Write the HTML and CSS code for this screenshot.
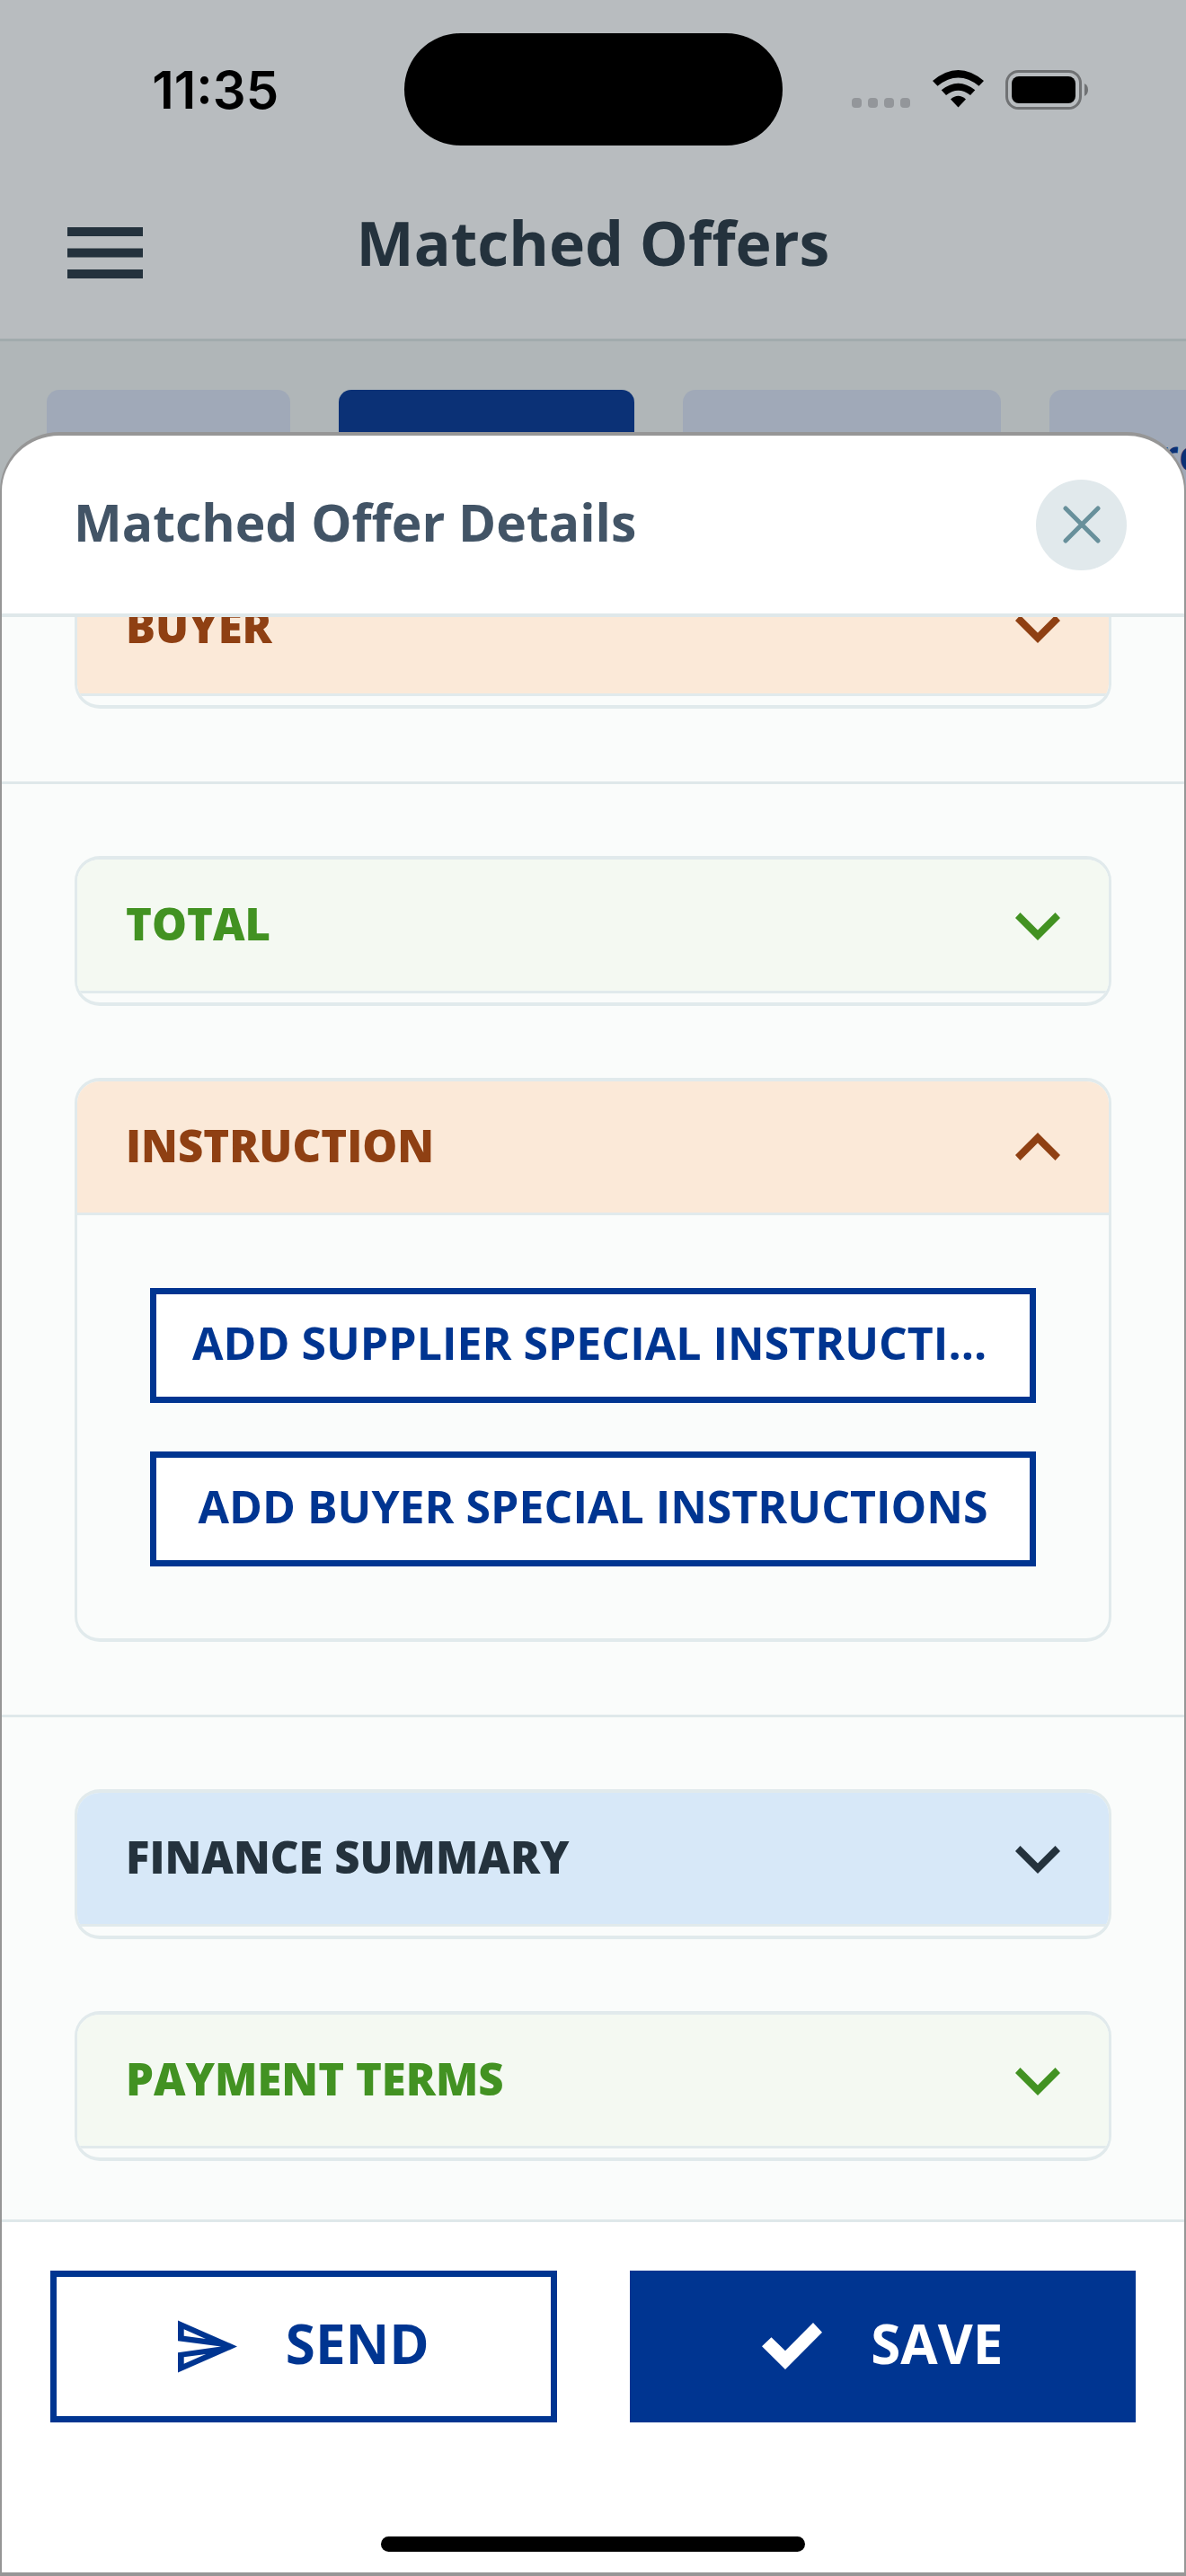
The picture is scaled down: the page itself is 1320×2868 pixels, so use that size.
FILE: index.html
```html
<!DOCTYPE html>
<html lang="en">
<head>
<meta charset="utf-8">
<meta name="viewport" content="width=device-width, initial-scale=1">
<title>Matched Offers</title>
<link rel="stylesheet" href="styles.css">
</head>
<body>
<svg class="sprite" aria-hidden="true">
  <symbol id="chevron-down" viewBox="0 0 50 40"><path d="M5.5 8 25 27.500 44.500 8 50 14 25 39 0 14z"/></symbol>
  <symbol id="chevron-up" viewBox="0 0 50 40"><path d="M5.5 37 25 17.500 44.500 37 50 31 25 6 0 31z"/></symbol>
</svg>

<div class="screen">
  <header class="top">
    <div class="status">
      <time class="clock">11:35</time>
      <div class="island"></div>
      <div class="status-icons" aria-hidden="true">
        <svg width="66" height="43" viewBox="0 0 66 43" fill="#93969a">
          <rect x="0" y="31" width="11" height="11" rx="4"/>
          <rect x="18" y="31" width="11" height="11" rx="4"/>
          <rect x="36" y="31" width="11" height="11" rx="4"/>
          <rect x="54" y="31" width="11" height="11" rx="4"/>
        </svg>
        <svg width="57" height="43" viewBox="0 0 57 43">
          <path d="M0 12Q28.500-12 57 12L51.500 17.700Q28.500-.7 5.500 17.700z"/>
          <path d="M9.700 22.300Q28.500 7.100 47.300 22.300L42 28Q28.500 17.400 15 28z"/>
          <path d="M20 32.500Q28.500 25 37 32.500L28.500 41.500z"/>
        </svg>
        <svg width="93" height="44" viewBox="0 0 93 44">
          <rect x="1.500" y="1.500" width="82" height="41" rx="13" fill="none" stroke="#707274" stroke-width="3"/>
          <rect x="7" y="7" width="71" height="30" rx="8"/>
          <path d="M88 15Q92 17 92 22T88 29z" fill="#707274"/>
        </svg>
      </div>
    </div>
    <div class="app-bar">
      <button class="menu" type="button" aria-label="Menu">
        <svg width="84" height="57" viewBox="0 0 84 57"><path d="M0 0h84v10H0zM0 23.500h84v10H0zM0 47h84v10H0z"/></svg>
      </button>
      <h1 class="app-title">Matched Offers</h1>
    </div>
  </header>

  <nav class="tabs" aria-label="Offer status">
    <button class="tab tab-s" type="button" aria-label="First tab"></button>
    <button class="tab tab-m tab-active" type="button" aria-label="Second tab"></button>
    <button class="tab tab-l" type="button" aria-label="Third tab"></button>
    <button class="tab tab-text" type="button">Processed</button>
  </nav>

  <section class="sheet" role="dialog" aria-labelledby="sheet-title">
    <header class="sheet-head">
      <h2 class="sheet-title" id="sheet-title">Matched Offer Details</h2>
      <button class="close" type="button" aria-label="Close">
        <svg width="42" height="42" viewBox="0 0 42 42"><path d="M3 3 39 39M39 3 3 39"/></svg>
      </button>
    </header>

    <div class="sheet-body">
      <div class="scrolled">
        <div class="group">
          <article class="card">
            <button class="card-head orange" type="button" aria-expanded="false">BUYER<svg class="chevron"><use href="#chevron-down"/></svg></button>
          </article>
        </div>
        <div class="group">
          <article class="card">
            <button class="card-head green" type="button" aria-expanded="false">TOTAL<svg class="chevron"><use href="#chevron-down"/></svg></button>
          </article>
          <article class="card">
            <button class="card-head orange" type="button" aria-expanded="true">INSTRUCTION<svg class="chevron"><use href="#chevron-up"/></svg></button>
            <div class="card-body">
              <button class="outline-btn" type="button">ADD SUPPLIER SPECIAL INSTRUCTIONS</button>
              <button class="outline-btn" type="button">ADD BUYER SPECIAL INSTRUCTIONS</button>
            </div>
          </article>
        </div>
        <div class="group">
          <article class="card">
            <button class="card-head blue" type="button" aria-expanded="false">FINANCE SUMMARY<svg class="chevron"><use href="#chevron-down"/></svg></button>
          </article>
          <article class="card">
            <button class="card-head green" type="button" aria-expanded="false">PAYMENT TERMS<svg class="chevron"><use href="#chevron-down"/></svg></button>
          </article>
        </div>
      </div>
    </div>

    <footer class="sheet-foot">
      <div class="actions">
        <button class="action" type="button">
          <svg width="66" height="66" viewBox="0 0 66 66"><path fill-rule="evenodd" d="M0 7.500 66 36.500 0 65.500V43.200L48 36.500 0 30.200zM6.700 17.200V24.800L31 28zM6.700 55.800V48.200L31 45z"/></svg>
          SEND
        </button>
        <button class="action action-primary" type="button">
          <svg width="67" height="66" viewBox="0 0 67 66"><path d="M0 36.300 10.500 26.300 26 41.300 57 10 67 20.700 26 62z"/></svg>
          SAVE
        </button>
      </div>
      <div class="home-indicator"></div>
    </footer>
  </section>
</div>
</body>
</html>
```
FILE: styles.css
```css
:root {
  --blue: #003591;
  --ink: #24323d;
  --line: #dfe8ea;
  --card-line: #e1eaec;
}

* { box-sizing: border-box; }

body {
  margin: 0;
  font-family: "Open Sans", "Noto Sans", sans-serif;
  color: var(--ink);
}

button {
  margin: 0;
  padding: 0;
  border: 0;
  background: none;
  font: inherit;
  color: inherit;
}

h1, h2 { margin: 0; }

.sprite {
  position: absolute;
  width: 0;
  height: 0;
}

.screen {
  position: relative;
  height: 100vh;
  background: #b0b6b8;
  overflow: hidden;
}

/* Status bar and app bar */
.top {
  background: #b8bcbf;
  border-bottom: 3px solid #a1abad;
}

.status {
  display: grid;
  grid-template-columns: 1fr 421px 1fr;
  align-items: center;
  padding-top: 37px;
}

.clock {
  padding-left: 30px;
  text-align: center;
  font: 600 58px/60px Inter, sans-serif;
  color: #000;
}

.island {
  height: 125px;
  border-radius: 63px;
  background: #000;
}

.status-icons {
  display: flex;
  align-items: center;
  justify-content: flex-end;
  gap: 24px;
  padding-right: 108px;
}

.app-bar {
  display: grid;
  grid-template-columns: 1fr auto 1fr;
  align-items: center;
  height: 215px;
}

.menu {
  justify-self: start;
  padding: 24px 0 0 75px;
}

.menu svg {
  display: block;
  fill: var(--ink);
}

.app-title {
  font-size: 68px;
  font-weight: 700;
  line-height: 96px;
}

/* Tabs behind the sheet */
.tabs {
  display: flex;
  gap: 54px;
  padding: 54px 0 0 52px;
  overflow: hidden;
}

.tab {
  flex: none;
  height: 140px;
  border-radius: 14px;
  background: #a0a9b8;
  color: #0b3176;
  font-size: 48px;
  font-weight: 700;
  white-space: nowrap;
}

.tab-s { width: 271px; }
.tab-m { width: 329px; }
.tab-l { width: 354px; }
.tab-active { background: #0b3176; }
.tab-text { padding: 4px 92px 0; }

/* Bottom sheet */
.sheet {
  position: absolute;
  inset: 481px 0 0;
  display: flex;
  flex-direction: column;
  border: 2px solid #969696;
  border-width: 4px 2px;
  border-radius: 66px 66px 0 0;
  background: #fff;
  overflow: hidden;
}

.sheet-head {
  display: flex;
  align-items: center;
  justify-content: space-between;
  height: 202px;
  padding: 0 64px 0 80px;
  border-bottom: 4px solid var(--line);
}

.sheet-title {
  padding-bottom: 6px;
  font-size: 57px;
  font-weight: 700;
  line-height: 78px;
  color: #425466;
}

.close {
  display: grid;
  place-items: center;
  width: 101px;
  height: 101px;
  border-radius: 50%;
  background: #e1e9ec;
}

.close svg {
  fill: none;
  stroke: #68909b;
  stroke-width: 5px;
  stroke-linecap: round;
}

.sheet-body {
  flex: 1;
  min-height: 0;
  background: #fafcfb;
  overflow: hidden;
}

/* List is scrolled so the first card sits partly under the header */
.scrolled { margin-top: -145px; }

.group {
  display: flex;
  flex-direction: column;
  gap: 80px;
  padding: 80px 81px 81px;
}

.group + .group { border-top: 3px solid var(--line); }

.card {
  padding-bottom: 10px;
  border: 3px solid var(--card-line);
  border-width: 4px 3px;
  border-radius: 28px;
  overflow: hidden;
}

.card-head {
  display: flex;
  align-items: center;
  justify-content: space-between;
  width: 100%;
  height: 149px;
  padding: 0 54px 4px;
  border-bottom: 3px solid var(--card-line);
  font-size: 49px;
  font-weight: 800;
  line-height: 66px;
}

.chevron {
  width: 50px;
  height: 40px;
  fill: currentColor;
}

.orange { background: #fbe9d8; color: #8f4013; }
.green { background: #f4f9f2; color: #429222; }
.blue { background: #d7e8f8; color: var(--ink); }

.card-body {
  display: flex;
  flex-direction: column;
  gap: 54px;
  padding: 81px 81px 70px;
}

.outline-btn {
  height: 128px;
  padding: 0 40px 6px;
  border: 7px solid var(--blue);
  background: #fff;
  color: var(--blue);
  font-size: 50px;
  font-weight: 700;
  line-height: 68px;
  white-space: nowrap;
  overflow: hidden;
  text-overflow: ellipsis;
}

/* Footer */
.sheet-foot {
  display: flex;
  flex-direction: column;
  align-items: center;
  gap: 127px;
  padding: 54px 54px 23px;
  border-top: 3px solid var(--line);
}

.actions {
  display: grid;
  grid-template-columns: 1fr 1fr;
  gap: 81px;
  width: 100%;
}

.action {
  display: flex;
  align-items: center;
  justify-content: center;
  gap: 54px;
  height: 169px;
  padding-bottom: 8px;
  border: 7px solid var(--blue);
  color: var(--blue);
  font-size: 60px;
  font-weight: 700;
  line-height: 80px;
}

.action svg { fill: currentColor; }

.action-primary {
  background: var(--blue);
  color: #fff;
}

.home-indicator {
  width: 472px;
  height: 17px;
  border-radius: 9px;
  background: #000;
}
```
